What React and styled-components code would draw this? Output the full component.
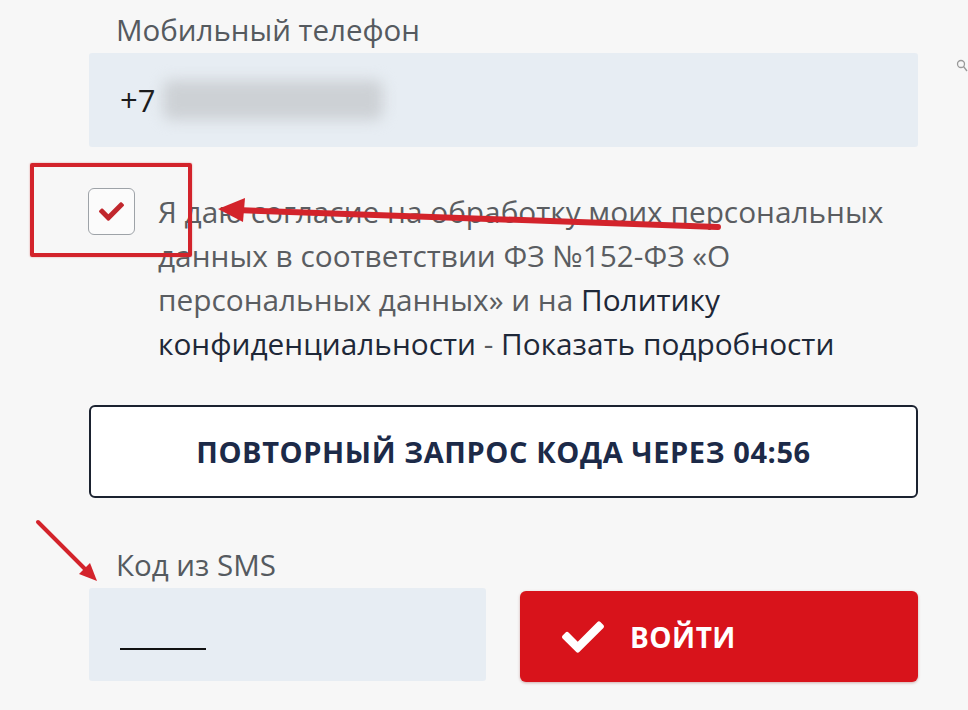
import styled, { createGlobalStyle } from "styled-components";
import { FaCheck } from "react-icons/fa";

const GlobalStyle = createGlobalStyle`
  html, body {
    margin: 0;
    padding: 0;
    background: #f7f7f7;
  }
  body {
    font-family: "Open Sans", "Liberation Sans", sans-serif;
    width: 968px;
    height: 710px;
    overflow: hidden;
  }
`;

export default function App() {
  return (
    <>
      <GlobalStyle />
      <Page>
        <Form>
          <Label>Мобильный телефон</Label>
          <PhoneField>
            <Prefix>+7</Prefix>
            <Blurred />
          </PhoneField>

          <Consent>
            <Checkbox>
              <FaCheck size={25} />
            </Checkbox>
            <ConsentText>
              Я даю согласие на обработку моих персональных
              <br />
              данных в соответствии ФЗ №152-ФЗ «О
              <br />
              персональных данных» и на <Link>Политику</Link>
              <br />
              <Link>конфиденциальности</Link> - <Link>Показать подробности</Link>
            </ConsentText>
          </Consent>

          <OutlineButton>Повторный запрос кода через 04:56</OutlineButton>

          <Label $top={49}>Код из SMS</Label>
          <CodeRow>
            <CodeField>
              <Caret />
            </CodeField>
            <SubmitButton>
              <FaCheck size={42} />
              Войти
            </SubmitButton>
          </CodeRow>
        </Form>

        <SidePin viewBox="0 0 14 20" width="14" height="20">
          <circle cx="6" cy="6" r="3.5" fill="none" stroke="#999" strokeWidth="1.3" />
          <path d="M8.5 8.5 L12 13" stroke="#999" strokeWidth="1.3" />
        </SidePin>
        <Highlight />
        <Arrows width="968" height="710" viewBox="0 0 968 710">
          <path
            d="M718 227 L236 210"
            stroke="#d3232b"
            strokeWidth="6"
            strokeLinecap="round"
            fill="none"
          />
          <path d="M218 209 L245 198 L243 222 Z" fill="#d3232b" />
          <path
            d="M38 522 L86 570"
            stroke="#d3232b"
            strokeWidth="4"
            strokeLinecap="round"
            fill="none"
          />
          <path d="M97 581 L79 574 L90 563 Z" fill="#d3232b" />
        </Arrows>
      </Page>
    </>
  );
}

const Page = styled.div`
  position: relative;
  width: 968px;
  height: 710px;
  overflow: hidden;
`;

const Form = styled.div`
  width: 829px;
  margin-left: 89px;
  padding-top: 12px;
  display: flex;
  flex-direction: column;
`;

const Label = styled.div`
  font-size: 29.5px;
  line-height: 36px;
  color: #555a5f;
  padding-left: 27px;
  margin-top: ${(p) => p.$top || 0}px;
  margin-bottom: 5px;
`;

const PhoneField = styled.div`
  height: 94px;
  background: #e7edf3;
  border-radius: 3px;
  display: flex;
  align-items: center;
  padding-left: 31px;
  gap: 8px;
`;

const Prefix = styled.span`
  font-size: 31px;
  color: #1b1b1b;
`;

const Blurred = styled.span`
  width: 220px;
  height: 40px;
  background: #cdd1d5;
  border-radius: 8px;
  filter: blur(7px);
`;

const Consent = styled.div`
  display: flex;
  align-items: flex-start;
  gap: 23px;
  margin-top: 41px;
  margin-left: -1px;
`;

const Checkbox = styled.div`
  flex: none;
  width: 45px;
  height: 45px;
  border: 1px solid #9ea3a8;
  border-radius: 6px;
  background: #fbfbfb;
  display: flex;
  align-items: center;
  justify-content: center;
  color: #c1272d;
`;

const ConsentText = styled.p`
  margin: 2px 0 0;
  font-size: 29.8px;
  line-height: 44px;
  color: #5a5d61;
  white-space: nowrap;
`;

const Link = styled.span`
  color: #1e2838;
`;

const OutlineButton = styled.div`
  margin-top: 39px;
  height: 89px;
  border: 2px solid #1b2230;
  border-radius: 6px;
  background: #ffffff;
  display: flex;
  align-items: center;
  justify-content: center;
  text-transform: uppercase;
  font-weight: 700;
  font-size: 29px;
  letter-spacing: 0.6px;
  color: #1c2a48;
`;

const CodeRow = styled.div`
  display: flex;
  align-items: flex-start;
  gap: 34px;
`;

const CodeField = styled.div`
  width: 397px;
  height: 93px;
  background: #e7edf3;
  border-radius: 3px;
  display: flex;
  align-items: flex-end;
  padding: 0 0 31px 31px;
  box-sizing: border-box;
`;

const Caret = styled.span`
  width: 86px;
  height: 2px;
  background: #111;
`;

const SubmitButton = styled.div`
  width: 398px;
  height: 91px;
  margin-top: 3px;
  background: #d8131b;
  border-radius: 6px;
  box-shadow: 0 1px 3px rgba(120, 0, 0, 0.3);
  display: flex;
  align-items: center;
  gap: 26px;
  padding-left: 42px;
  box-sizing: border-box;
  color: #fff;
  font-weight: 700;
  font-size: 28px;
  letter-spacing: 0.5px;
  text-transform: uppercase;
`;

const SidePin = styled.svg`
  position: absolute;
  left: 955px;
  top: 58px;
`;

const Highlight = styled.div`
  position: absolute;
  left: 30px;
  top: 163px;
  width: 154px;
  height: 86px;
  border: 4px solid #d3232b;
  border-radius: 2px;
  box-shadow: 0 0 2px rgba(200, 0, 0, 0.4);
`;

const Arrows = styled.svg`
  position: absolute;
  left: 0;
  top: 0;
  pointer-events: none;
`;
